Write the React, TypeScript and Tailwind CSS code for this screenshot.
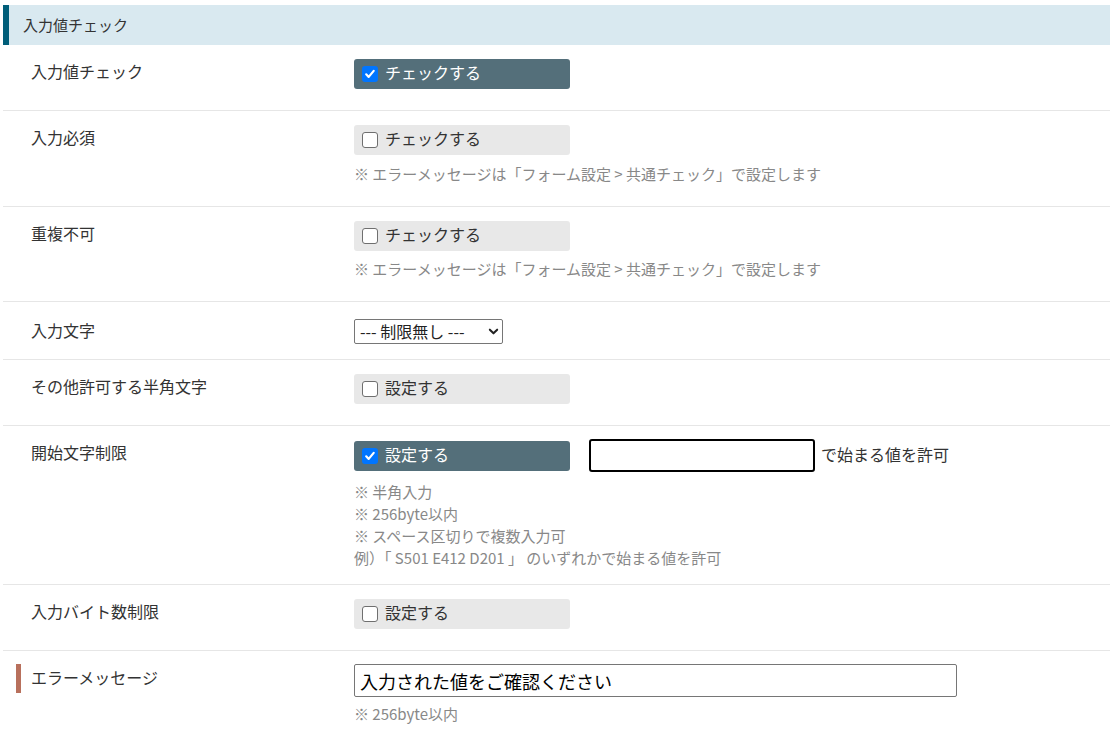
import type { ReactNode } from 'react'

const note = 'text-[15px] leading-[22px] text-[#888888]'

function Box({ checked }: { checked?: boolean }) {
  if (checked) {
    return (
      <span className="w-4 h-4 rounded-[3px] bg-[#0075ff] flex items-center justify-center shrink-0">
        <svg viewBox="0 0 12 12" className="w-3 h-3" fill="none" stroke="white" strokeWidth="2.2" strokeLinecap="round" strokeLinejoin="round">
          <path d="M2.2 6.3l2.5 2.6 5-6" />
        </svg>
      </span>
    )
  }
  return <span className="w-4 h-4 rounded-[3px] border-[1.5px] border-[#6f6f6f] bg-white shrink-0" />
}

function CheckBox({ checked, label }: { checked?: boolean; label: string }) {
  return (
    <label
      className={`flex items-center gap-[7px] w-[216px] h-[30px] pl-2 rounded-[3px] text-[16px] ${
        checked ? 'bg-[#546f7a] text-white' : 'bg-[#e8e8e8] text-[#333333]'
      }`}
    >
      <Box checked={checked} />
      <span className="relative -top-[2px]">{label}</span>
    </label>
  )
}

function Row({ label, children }: { label: string; children: ReactNode }) {
  return (
    <div className="flex border-b border-[#e6e6e6] pt-[14px] pb-[21px]">
      <div className="w-[351px] shrink-0 pl-[28px] leading-6 text-[16px] text-[#333333]">{label}</div>
      <div className="flex-1">{children}</div>
    </div>
  )
}

const commonNote = '※ エラーメッセージは「フォーム設定 > 共通チェック」で設定します'

export default function App() {
  return (
    <div
      className="w-[1110px] pt-[5px] pl-[3px] bg-white"
      style={{ fontFamily: '"Noto Sans CJK JP", "Noto Sans", sans-serif' }}
    >
      <div className="h-10 flex items-center bg-[#d9e9f0] border-l-[6px] border-[#005e79] pl-[14px] text-[15px] text-[#333333]">
        入力値チェック
      </div>

      <Row label="入力値チェック">
        <CheckBox checked label="チェックする" />
      </Row>

      <Row label="入力必須">
        <CheckBox label="チェックする" />
        <p className={`${note} mt-[8px]`}>{commonNote}</p>
      </Row>

      <Row label="重複不可">
        <CheckBox label="チェックする" />
        <p className={`${note} mt-[7px]`}>{commonNote}</p>
      </Row>

      <div className="flex border-b border-[#e6e6e6] pt-[14px] pb-[13px]">
        <div className="w-[351px] shrink-0 pl-[28px] pt-[2px] leading-6 text-[16px] text-[#333333]">入力文字</div>
        <div className="flex-1 h-[30px] flex items-center">
          <div className="relative w-[149px] h-[25px]">
            <select className="appearance-none w-full h-full border border-[#767676] rounded-[2px] pl-[5px] text-[16px] leading-[22px] text-[#222222] bg-white">
              <option>--- 制限無し ---</option>
            </select>
            <svg
              viewBox="0 0 12 12"
              className="absolute right-[4px] top-[7px] w-[11px] h-[11px] pointer-events-none"
              fill="none"
              stroke="#222222"
              strokeWidth="2.2"
              strokeLinecap="round"
              strokeLinejoin="round"
            >
              <path d="M2 4l4 4 4-4" />
            </svg>
          </div>
        </div>
      </div>

      <Row label="その他許可する半角文字">
        <CheckBox label="設定する" />
      </Row>

      <div className="flex border-b border-[#e6e6e6] pt-[13px] pb-[15px]">
        <div className="w-[351px] shrink-0 pl-[28px] pt-[1px] leading-6 text-[16px] text-[#333333]">開始文字制限</div>
        <div className="flex-1">
          <div className="flex items-center h-[33px]">
            <CheckBox checked label="設定する" />
            <input
              type="text"
              className="ml-[19px] w-[226px] h-[33px] border-2 border-black rounded-[3px] px-2 outline-none"
            />
            <span className="ml-[6px] relative -top-[2px] text-[16px] text-[#333333]">で始まる値を許可</span>
          </div>
          <div className={`${note} mt-[9px]`}>
            <p>※ 半角入力</p>
            <p>※ 256byte以内</p>
            <p>※ スペース区切りで複数入力可</p>
            <p>例）「 S501 E412 D201 」 のいずれかで始まる値を許可</p>
          </div>
        </div>
      </div>

      <Row label="入力バイト数制限">
        <CheckBox label="設定する" />
      </Row>

      <div className="flex pt-[13px] pb-4">
        <div className="w-[351px] shrink-0 pl-[13px]">
          <div className="border-l-[5px] border-[#b8705c] pl-[10px] h-[29px] leading-[27px] text-[16px] text-[#333333]">
            エラーメッセージ
          </div>
        </div>
        <div className="flex-1">
          <input
            type="text"
            defaultValue="入力された値をご確認ください"
            className="w-[603px] h-[33px] border border-[#767676] rounded-[2px] px-[5px] text-[18px] text-black outline-none"
          />
          <p className={`${note} mt-[6px]`}>※ 256byte以内</p>
        </div>
      </div>
    </div>
  )
}
